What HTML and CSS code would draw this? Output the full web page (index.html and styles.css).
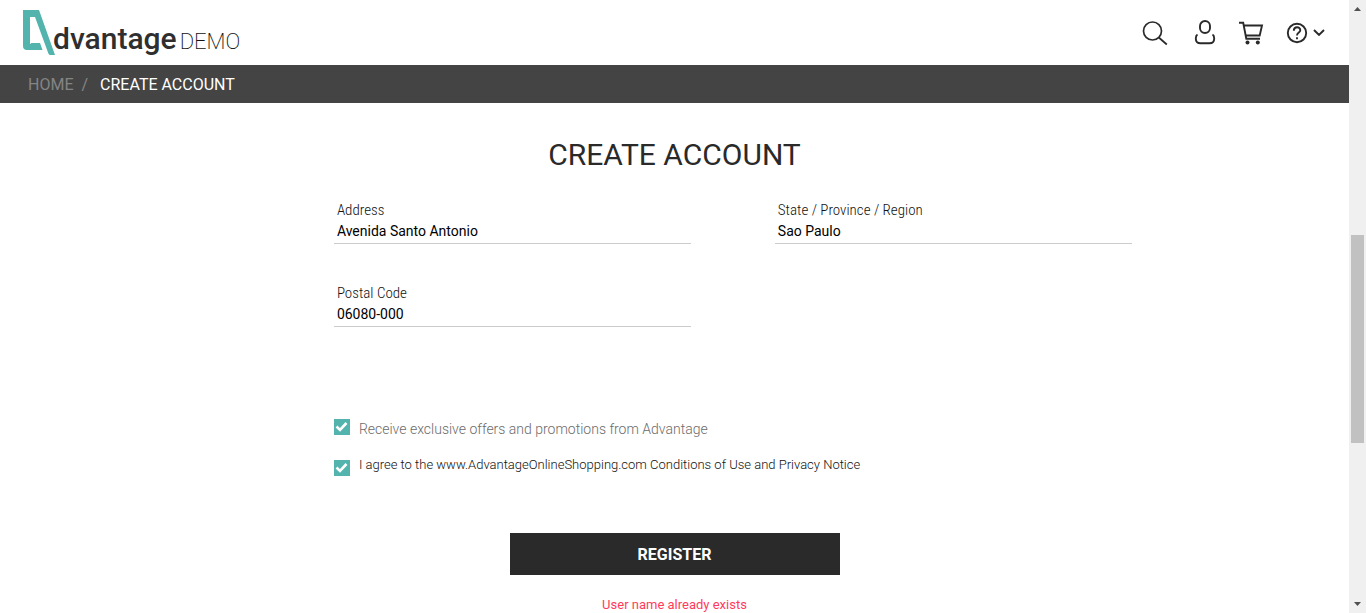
FILE: index.html
```html
<!DOCTYPE html>
<html lang="en">
<head>
<meta charset="utf-8">
<meta name="viewport" content="width=device-width, initial-scale=1">
<title>Create Account - Advantage DEMO</title>
<link rel="stylesheet" href="styles.css">
</head>
<body>
<div class="page">
  <header class="header">
    <a class="logo" href="#" aria-label="Advantage DEMO">
      <svg class="logo-mark" width="33" height="46" viewBox="0 0 33 46" aria-hidden="true"><path fill="#53b3ad" fill-rule="evenodd" d="M1 1H17L33 46H28.500Q27 46 26.400 44.500L13 8H8V35L9.500 34H18L20.500 41H5Q1 41 1 37Z"/></svg>
      <span class="logo-name">dvantage</span>
      <span class="logo-demo">DEMO</span>
    </a>
    <nav class="tools" aria-label="Shop tools">
      <button class="tool" aria-label="Search"><svg width="26" height="26" viewBox="0 0 26 26" fill="none" stroke="#2a2a2a" stroke-width="1.7"><circle cx="10.500" cy="11" r="9"/><path d="M16.800 17.500L24.800 24.500"/></svg></button>
      <button class="tool" aria-label="User"><svg width="26" height="26" viewBox="-4 1 26 26" fill="none" stroke="#2a2a2a" stroke-width="1.900"><rect x="6" y="2" width="10" height="12" rx="5"/><path d="M3.500 15.500C2.300 16.200 1.800 17.500 1.800 19.500C1.800 23 3.500 24.300 6.500 24.300H15.500C18.500 24.300 20.200 23 20.200 19.500C20.200 17.500 19.700 16.200 18.500 15.500"/></svg></button>
      <button class="tool" aria-label="Cart"><svg width="26" height="26" viewBox="0 0 26 26" fill="none" stroke="#2a2a2a" stroke-width="1.900"><path d="M1 2.800H5.200L8.300 18.800H22M5.800 5.500H24L21.700 15.500H8"/><circle cx="9.500" cy="22.500" r="2" fill="#2a2a2a" stroke="none"/><circle cx="19.800" cy="22.500" r="2" fill="#2a2a2a" stroke="none"/></svg></button>
      <button class="tool" aria-label="Help"><svg width="40" height="22" viewBox="0 0 40 22" fill="none" stroke="#2a2a2a" stroke-width="1.900"><circle cx="11" cy="11" r="9.200"/><path d="M7.800 8.800C7.800 4 14.300 4.300 14.300 8.300C14.300 10.600 11 10.600 11 13.500M11 15.200V17.200M28 8L33 13L38 8"/></svg></button>
    </nav>
  </header>
  <nav class="crumbs" aria-label="Breadcrumb">
    <a class="crumb-link" href="#">HOME</a>
    <span class="crumb-sep">/</span>
    <span class="crumb-current">CREATE ACCOUNT</span>
  </nav>
  <main>
    <h1 class="title">CREATE ACCOUNT</h1>
    <form class="form">
      <div class="fields">
        <div class="field"><label for="address">Address</label><input id="address" type="text" value="Avenida Santo Antonio"></div>
        <div class="field"><label for="state">State / Province / Region</label><input id="state" type="text" value="Sao Paulo"></div>
        <div class="field"><label for="postal">Postal Code</label><input id="postal" type="text" value="06080-000"></div>
      </div>
      <div class="checks">
        <div class="check"><input id="offers" type="checkbox" checked><label class="offers" for="offers">Receive exclusive offers and promotions from Advantage</label></div>
        <div class="check"><input id="agree" type="checkbox" checked><label class="agree" for="agree">I agree to the www.AdvantageOnlineShopping.com Conditions of Use and Privacy Notice</label></div>
      </div>
      <div class="submit">
        <button class="register" type="button">REGISTER</button>
        <p class="error" role="alert">User name already exists</p>
      </div>
    </form>
  </main>
</div>
<div class="scrollbar" aria-hidden="true">
  <svg class="arrow" width="17" height="17" viewBox="0 0 17 17"><path fill="#505050" d="M5 11L8.500 7L12 11Z"/></svg>
  <div class="track"><div class="thumb"></div></div>
  <svg class="arrow" width="17" height="17" viewBox="0 0 17 17"><path fill="#505050" d="M5 6L8.500 10L12 6Z"/></svg>
</div>
</body>
</html>
```
FILE: styles.css
```css
* { box-sizing: border-box; }

body {
  display: flex;
  height: 100vh;
  margin: 0;
  overflow: hidden;
  background: #fff;
  color: #2a2a2a;
  font-family: Roboto, sans-serif;
}

.page {
  flex: 1;
  min-width: 0;
}

.header {
  display: flex;
  align-items: center;
  justify-content: space-between;
  padding: 9px 23px 10px 22px;
}

.logo {
  display: flex;
  align-items: flex-end;
  color: #2f2f2f;
  text-decoration: none;
}

.logo-name {
  margin-left: -2px;
  font-size: 30px;
  font-weight: 500;
  line-height: 32px;
}

.logo-demo {
  margin-left: 3px;
  color: #111;
  font-size: 22px;
  font-weight: 200;
  line-height: 26px;
}

.tools {
  display: flex;
  align-items: center;
  gap: 22px;
  padding-top: 2px;
}

.tool {
  display: flex;
  padding: 0;
  border: 0;
  background: none;
}

.crumbs {
  display: flex;
  align-items: center;
  height: 38px;
  padding: 0 28px;
  background: #444;
  color: #848484;
  font-size: 16px;
}

.crumb-link {
  color: inherit;
  text-decoration: none;
}

.crumb-sep { margin: 0 12px 0 8px; }

.crumb-current {
  color: #fff;
}

.title {
  margin: 32px 0 25px;
  font-size: 30px;
  font-weight: 400;
  line-height: 40px;
  text-align: center;
}

.fields {
  display: grid;
  grid-template-columns: 1fr 1fr;
  gap: 39px 84px;
  padding: 0 16.1% 0 24.75%;
}

.field {
  display: flex;
  flex-direction: column;
}

.field label {
  padding-left: 3px;
  color: #111;
  font-family: "Roboto Condensed", Roboto, sans-serif;
  font-size: 15px;
  font-weight: 300;
  line-height: 20px;
}

.field input {
  width: 100%;
  height: 24px;
  padding: 0 3px 1px;
  border: 0;
  border-bottom: 1px solid #ccc;
  background: none;
  color: #000;
  font: 14px Roboto, sans-serif;
}

.checks {
  display: grid;
  gap: 19px;
  margin-top: 90px;
  padding-left: 24.75%;
}

.check {
  display: flex;
  align-items: flex-start;
  gap: 9px;
  line-height: 20px;
}

.check input {
  flex: none;
  width: 16px;
  height: 16px;
  margin: 2px 0 0;
  appearance: none;
  background: #53b3ad url("data:image/svg+xml,%3Csvg xmlns='http://www.w3.org/2000/svg' viewBox='0 0 16 16'%3E%3Cpath d='M2.500 7.500L6 11L12.500 4' fill='none' stroke='white' stroke-width='2.600'/%3E%3C/svg%3E");
}

.offers {
  padding-top: 2px;
  color: #6c6c6c;
  font-size: 14px;
  font-weight: 300;
}

.agree {
  color: #111;
  font-size: 13px;
  font-weight: 300;
  line-height: 14px;
}

.submit {
  display: flex;
  flex-direction: column;
  align-items: center;
  margin-top: 57px;
}

.register {
  width: 330px;
  height: 42px;
  border: 0;
  background: #2a2a2a;
  color: #fff;
  font: bold 16px Roboto, sans-serif;
}

.error {
  margin: 20px 0 0;
  color: #ff3b5c;
  font-size: 13px;
  line-height: 20px;
}

.scrollbar {
  display: flex;
  flex-direction: column;
  width: 17px;
  background: #f0f0f0;
}

.track {
  flex: 1;
  padding: 0 2px;
}

.thumb {
  height: 36%;
  background: #c1c1c1;
}

.track::before {
  display: block;
  height: 37.6%;
  content: "";
}
```
